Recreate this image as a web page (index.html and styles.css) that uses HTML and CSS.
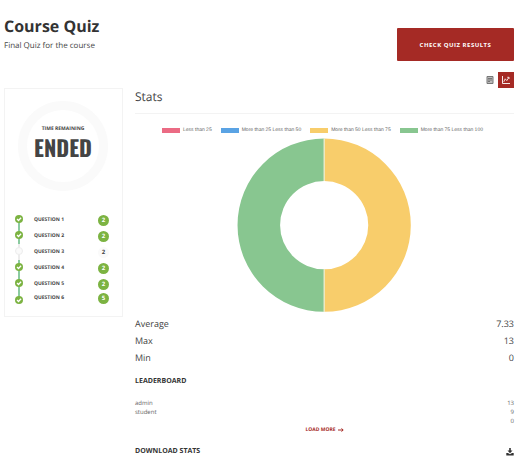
FILE: index.html
```html
<!DOCTYPE html>
<html lang="en">
<head>
<meta charset="utf-8">
<meta name="viewport" content="width=device-width, initial-scale=1">
<title>Course Quiz</title>
<link rel="stylesheet" href="styles.css">
</head>
<body>
<svg width="0" height="0" class="defs" aria-hidden="true">
  <symbol id="tick" viewBox="0 0 8 8"><circle cx="4" cy="4" r="4" fill="#7cb342"/><path d="M2 4.1 3.5 5.5 6.1 2.8" fill="none" stroke="#fff" stroke-width="1.3"/></symbol>
  <symbol id="dot" viewBox="0 0 8 8"><circle cx="4" cy="4" r="3.5" fill="#fafafa" stroke="#ececec"/></symbol>
</svg>
<header class="top">
  <div>
    <h1>Course Quiz</h1>
    <p class="intro">Final Quiz for the course</p>
  </div>
  <button class="results" type="button">CHECK QUIZ RESULTS</button>
</header>
<div class="layout">
  <aside class="side">
    <div class="timer">
      <span class="timer-label">TIME REMAINING</span>
      <strong class="timer-value">ENDED</strong>
    </div>
    <ol class="questions">
      <li class="done"><span class="step"><svg><use href="#tick"/></svg></span><a href="#q1">QUESTION 1</a><span class="mark">2</span></li>
      <li class="done"><span class="step"><svg><use href="#tick"/></svg></span><a href="#q2">QUESTION 2</a><span class="mark">2</span></li>
      <li><span class="step"><svg><use href="#dot"/></svg></span><a href="#q3">QUESTION 3</a><span class="mark">2</span></li>
      <li class="done"><span class="step"><svg><use href="#tick"/></svg></span><a href="#q4">QUESTION 4</a><span class="mark">2</span></li>
      <li class="done"><span class="step"><svg><use href="#tick"/></svg></span><a href="#q5">QUESTION 5</a><span class="mark">2</span></li>
      <li class="done"><span class="step"><svg><use href="#tick"/></svg></span><a href="#q6">QUESTION 6</a><span class="mark">5</span></li>
    </ol>
  </aside>
  <main class="main">
    <div class="tabs">
      <button type="button" aria-label="Questions"><svg width="8" height="8" viewBox="0 0 8 8"><path d="M1 .5h6v7H1z" fill="#bbb" stroke="#777"/><path d="M2 2.500h4M2 4h4M2 5.500h2" stroke="#666" stroke-width=".8"/></svg></button>
      <button type="button" class="active" aria-label="Stats"><svg width="8" height="8" viewBox="0 0 8 8" fill="none" stroke="#fff"><path d="M.5 0v7.500H8" stroke-width=".9"/><path d="M1.800 5.800 3.200 2.800 4.800 4.600 6.800 1.500M5.200 1.300h1.800v1.700" stroke-width=".8"/></svg></button>
    </div>
    <h2>Stats</h2>
    <ul class="legend">
      <li><i class="pink"></i>Less than 25</li>
      <li><i class="blue"></i>More than 25 Less than 50</li>
      <li><i class="yellow"></i>More than 50 Less than 75</li>
      <li><i class="green"></i>More than 75 Less than 100</li>
    </ul>
    <svg class="chart" viewBox="0 0 174 174" role="img" aria-label="Score distribution">
      <path d="M87 .5A86.500 86.500 0 0 1 87 173.500V131A44 44 0 0 0 87 43z" fill="#f8cd6b"/>
      <path d="M87 .5A86.500 86.500 0 0 0 87 173.500V131A44 44 0 0 1 87 43z" fill="#88c690"/>
      <path d="M87 0v43M87 131v43" stroke="#f1eed2" stroke-width="1.200"/>
    </svg>
    <dl class="totals">
      <div><dt>Average</dt><dd>7.33</dd></div>
      <div><dt>Max</dt><dd>13</dd></div>
      <div><dt>Min</dt><dd>0</dd></div>
    </dl>
    <h3>LEADERBOARD</h3>
    <table class="board">
      <tr><td>admin</td><td>13</td></tr>
      <tr><td>student</td><td>9</td></tr>
      <tr><td></td><td>0</td></tr>
    </table>
    <a class="more" href="#more">LOAD MORE <svg width="6" height="4" viewBox="0 0 6 4"><path d="M0 2h5M3.500.5 5.200 2 3.500 3.500" fill="none" stroke="#a52a25"/></svg></a>
    <div class="download">
      <h3>DOWNLOAD STATS</h3>
      <button type="button" aria-label="Download stats"><svg width="8" height="8" viewBox="0 0 8 8"><path d="M3.200 0h1.600v2.600h1.700L4 5.200 1.500 2.600h1.700zM.3 5h1.700l2 1.300L6 5h1.700v2.500H.3z" fill="#333"/></svg></button>
    </div>
  </main>
</div>
</body>
</html>
```
FILE: styles.css
```css
* { box-sizing: border-box; }
body {
  margin: 0;
  padding: 16px 6px 0 4px;
  background: #fff;
  color: #444;
  font-family: "Open Sans", "Noto Sans", sans-serif;
  font-size: 8px;
  line-height: 12px;
  text-rendering: geometricPrecision;
}
h1, h2, h3, p, ol, ul, dl, dd { margin: 0; padding: 0; }
ol, ul { list-style: none; }
button { border: 0; padding: 0; background: none; font: inherit; }
a { color: inherit; text-decoration: none; }
svg { display: block; }
.defs { position: absolute; }
.top { display: flex; justify-content: space-between; }
h1 { font-size: 16px; line-height: 20px; color: #333; }
.intro { margin-top: 4px; }
.results {
  width: 117px;
  height: 33px;
  margin-top: 12px;
  border-radius: 1px;
  background: #a52a25;
  color: #fff;
  font-size: 6px;
  font-weight: 700;
  letter-spacing: 0.5px;
}
.layout {
  display: grid;
  grid-template-columns: 119px 1fr;
  column-gap: 12px;
  align-items: start;
  margin-top: 11px;
}
.side {
  margin-top: 16px;
  padding: 12px 11px 12px 10px;
  border: 1px solid #f3f3f3;
}
.timer {
  display: flex;
  flex-direction: column;
  align-items: center;
  width: 90px;
  height: 90px;
  margin: 0 auto;
  padding-top: 15px;
  border: 9px solid #fafafa;
  border-radius: 50%;
}
.timer-label { font-size: 5px; line-height: 8px; font-weight: 700; white-space: nowrap; }
.timer-value {
  font-family: Oswald, "Liberation Sans Narrow", "Roboto Condensed", sans-serif;
  font-size: 22px;
  line-height: 30px;
}
.questions { margin-top: 21px; padding-right: 2px; }
.questions li {
  display: grid;
  grid-template-columns: 8px 1fr 11px;
  column-gap: 11px;
  align-items: center;
  height: 16px;
  font-size: 5px;
  font-weight: 700;
}
.questions li:last-child { height: 12px; }
.step {
  display: flex;
  align-items: center;
  height: 100%;
  padding-bottom: 2px;
  background: linear-gradient(#ececec, #ececec) center / 2px 100% no-repeat;
}
.done .step { background-image: linear-gradient(#8bcba0, #8bcba0); }
.questions li:first-child .step { background-size: 2px 10px; background-position: center bottom; }
.questions li:last-child .step { align-items: flex-end; padding: 0; background-size: 2px 8px; background-position: center top; }
.step svg { width: 8px; height: 8px; }
.mark { height: 11px; border-radius: 50%; background: #fafafa; font-size: 6px; line-height: 11px; text-align: center; }
.done .mark { background: #7cb342; color: #fff; }
.tabs { display: flex; justify-content: flex-end; }
.tabs button { display: grid; place-items: center; width: 16px; height: 16px; }
.tabs .active { background: #a52a25; }
h2 {
  padding-bottom: 7px;
  border-bottom: 1px solid #f3f3f3;
  font-size: 12px;
  line-height: 18px;
  font-weight: 400;
}
.legend {
  display: flex;
  justify-content: center;
  gap: 9px;
  margin-top: 12px;
  padding-right: 4px;
  color: #666;
  font: 5px/8px "Liberation Sans", sans-serif;
  white-space: nowrap;
}
.legend li { display: flex; align-items: center; gap: 3px; }
.legend i { width: 18px; height: 5px; }
.pink { background: #eb6b84; }
.blue { background: #5aa3e4; }
.yellow { background: #f8cd6b; }
.green { background: #88c690; }
.chart { width: 46%; margin: 4px auto 3px; }
.totals { font-size: 9px; line-height: 17px; }
.totals div { display: flex; justify-content: space-between; }
h3 { font-size: 7px; line-height: 12px; color: #333; }
.totals + h3 { margin-top: 10px; }
.board { width: 100%; margin-top: 11px; border-collapse: collapse; font-size: 6px; line-height: 9px; color: #666; }
.board td { height: 9px; padding: 0; }
.board td:last-child { text-align: right; }
.more {
  display: flex;
  justify-content: center;
  align-items: center;
  gap: 2px;
  color: #a52a25;
  font-size: 5px;
  line-height: 8px;
  font-weight: 700;
}
.download { display: flex; justify-content: space-between; align-items: center; margin-top: 12px; }
```
